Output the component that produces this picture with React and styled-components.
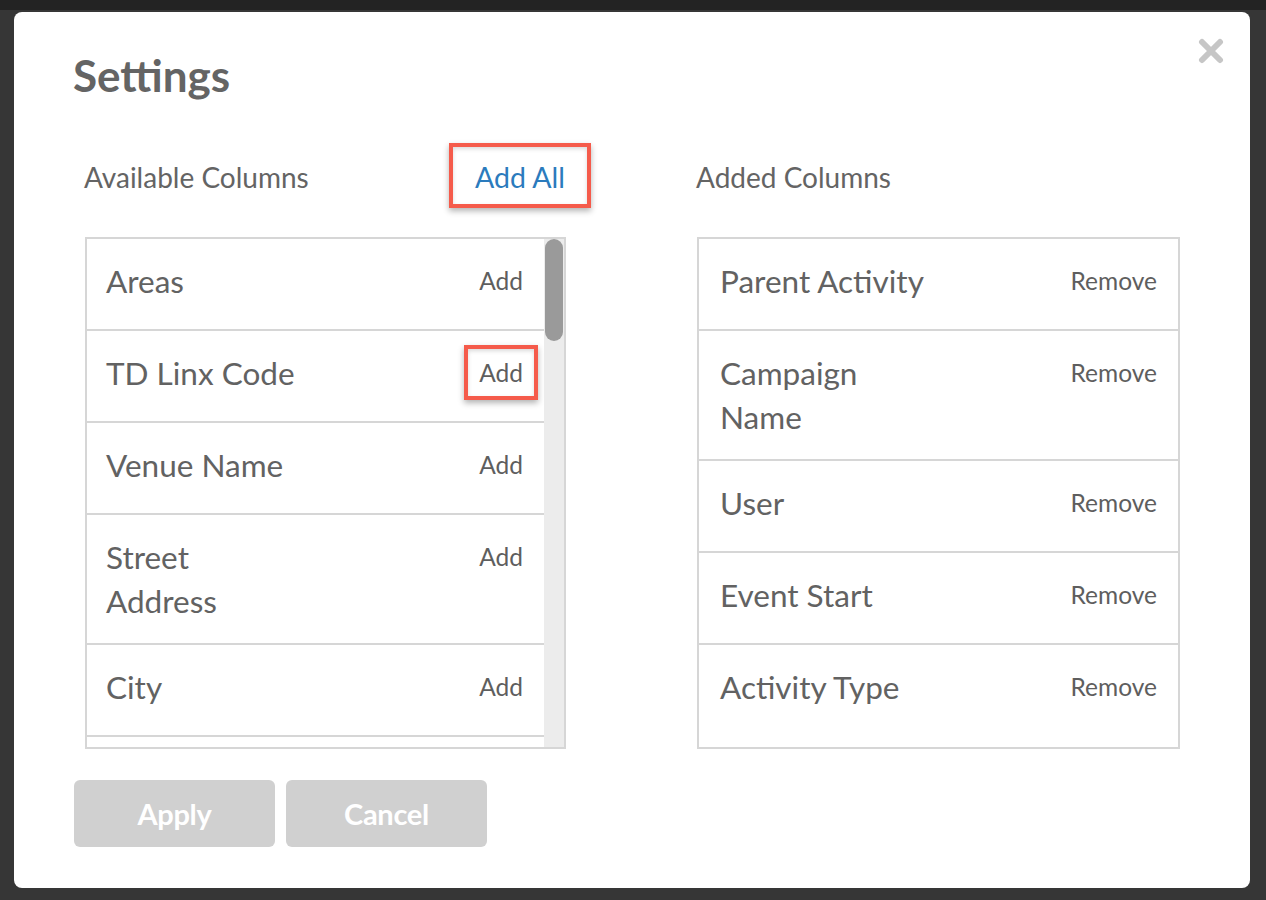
import React from 'react'
import styled, { createGlobalStyle } from 'styled-components'

const GlobalStyle = createGlobalStyle`
  html, body {
    margin: 0;
    padding: 0;
  }
  body {
    background: linear-gradient(#232323 0, #232323 10px, #363636 10px);
    font-family: 'Lato', 'Open Sans', sans-serif;
    color: #666;
  }
`

const available = ['Areas', 'TD Linx Code', 'Venue Name', 'Street Address', 'City']
const added = ['Parent Activity', 'Campaign Name', 'User', 'Event Start', 'Activity Type']

const App = () => {
  return (
    <Page>
      <GlobalStyle />
      <Modal>
        <Close aria-label='close'>
          <svg width='26' height='26' viewBox='0 0 26 26'>
            <path d='M4 4 L22 22 M22 4 L4 22' stroke='#c6c6c6' strokeWidth='6' strokeLinecap='round' />
          </svg>
        </Close>
        <Title>Settings</Title>
        <Columns>
          <Column>
            <HeadRow>
              <Heading>Available Columns</Heading>
              <AddAll>
                Add All
                <Marker $x={26} $top={17} $bottom={14} />
              </AddAll>
            </HeadRow>
            <ListBox>
              <ListScroll>
                {available.map((name, i) => (
                  <Row key={name}>
                    <Label>{name}</Label>
                    <Action>
                      Add
                      {i === 1 && <Marker $x={15} $top={6} $bottom={5} />}
                    </Action>
                  </Row>
                ))}
              </ListScroll>
              <Track>
                <Thumb />
              </Track>
            </ListBox>
          </Column>
          <Column $wide>
            <HeadRow>
              <Heading>Added Columns</Heading>
            </HeadRow>
            <ListBox>
              <ListScroll>
                {added.map((name) => (
                  <Row key={name} $wide>
                    <Label $wide>{name}</Label>
                    <Action>Remove</Action>
                  </Row>
                ))}
              </ListScroll>
            </ListBox>
          </Column>
        </Columns>
        <Footer>
          <Button>Apply</Button>
          <Button>Cancel</Button>
        </Footer>
      </Modal>
    </Page>
  )
}

export default App

const Page = styled.div`
  padding: 12px 16px 12px 14px;
`
const Modal = styled.div`
  position: relative;
  width: 1236px;
  box-sizing: border-box;
  background: #fff;
  border-radius: 8px;
  padding: 37px 60px 41px 60px;
`
const Close = styled.div`
  position: absolute;
  top: 26px;
  right: 26px;
  width: 26px;
  height: 26px;
`
const Title = styled.h1`
  margin: 0;
  font-size: 44px;
  line-height: 1.2;
  font-weight: 700;
  color: #646464;
  margin-left: -1px;
`
const Columns = styled.div`
  display: flex;
  gap: 131px;
  padding-left: 11px;
  margin-top: 59px;
`
const Column = styled.div`
  width: ${p => (p.$wide ? 483 : 481)}px;
  display: flex;
  flex-direction: column;
`
const HeadRow = styled.div`
  display: flex;
  justify-content: space-between;
  align-items: center;
  height: 32px;
  margin-bottom: 44px;
`
const Heading = styled.div`
  font-size: 28px;
  color: #646464;
  margin-left: -1px;
`
const AddAll = styled.div`
  position: relative;
  font-size: 28.5px;
  color: #2b7bbd;
  margin-right: 1px;
`
const Marker = styled.span`
  position: absolute;
  left: ${p => -p.$x}px;
  right: ${p => -p.$x}px;
  top: ${p => -p.$top}px;
  bottom: ${p => -p.$bottom}px;
  border: 4px solid #f55b4b;
  box-shadow: 0 3px 6px rgba(0, 0, 0, 0.3), inset 0 2px 4px rgba(0, 0, 0, 0.15);
  pointer-events: none;
`
const ListBox = styled.div`
  display: flex;
  height: 512px;
  box-sizing: border-box;
  border: 2px solid #d6d6d6;
  overflow: hidden;
`
const ListScroll = styled.div`
  flex: 1;
  overflow: hidden;
`
const Row = styled.div`
  display: flex;
  justify-content: space-between;
  align-items: flex-start;
  min-height: 92px;
  box-sizing: border-box;
  padding: 20px 21px 20px ${p => (p.$wide ? 21 : 19)}px;
  border-bottom: 2px solid #d6d6d6;
  &:last-child {
    border-bottom: ${p => (p.$wide ? 'none' : '2px solid #d6d6d6')};
  }
`
const Label = styled.div`
  font-size: 31.5px;
  line-height: 44px;
  color: #626262;
  max-width: ${p => (p.$wide ? 215 : 195)}px;
`
const Action = styled.div`
  position: relative;
  font-size: 24.5px;
  line-height: 44px;
  color: #5e5e5e;
`
const Track = styled.div`
  width: 20px;
  background: #ececec;
  display: flex;
  justify-content: center;
`
const Thumb = styled.div`
  width: 18px;
  height: 102px;
  border-radius: 9px;
  background: #9a9a9a;
`
const Footer = styled.div`
  display: flex;
  gap: 11px;
  margin-top: 31px;
`
const Button = styled.button`
  width: 201px;
  height: 67px;
  border: none;
  border-radius: 6px;
  background: #d0d0d0;
  color: #fff;
  font-family: 'Lato', sans-serif;
  font-weight: 700;
  font-size: 29px;
  letter-spacing: -0.3px;
`
